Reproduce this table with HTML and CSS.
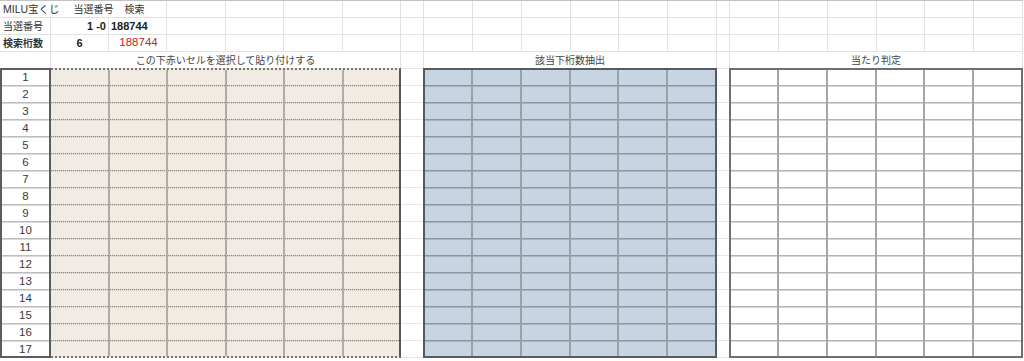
FILE: index.html
```html
<!DOCTYPE html>
<html lang="ja">
<head>
<meta charset="utf-8">
<title>MILU宝くじ</title>
<link rel="stylesheet" href="styles.css">
</head>
<body>
<div class="sheet">
  <div class="hdr">
    <div class="c span3 lbl"><span>MILU宝くじ</span><span class="w1">当選番号</span><span class="w2">検索</span></div>
    <span></span><span></span><span></span><span></span><span></span><span></span><span></span><span></span><span></span><span></span><span></span><span></span><span></span><span></span><span></span><span></span><span></span><span></span>

    <div class="c lbl">当選番号</div>
    <div class="c num bold right">1 -0</div>
    <div class="c num bold left">188744</div>
    <span></span><span></span><span></span><span></span><span></span><span></span><span></span><span></span><span></span><span></span><span></span><span></span><span></span><span></span><span></span><span></span><span></span><span></span>

    <div class="c lbl bold">検索桁数</div>
    <div class="c num bold center">6</div>
    <div class="c num red center">188744</div>
    <span></span><span></span><span></span><span></span><span></span><span></span><span></span><span></span><span></span><span></span><span></span><span></span><span></span><span></span><span></span><span></span><span></span><span></span>

    <div class="c r4"></div>
    <div class="c r4 ttl span6">この下赤いセルを選択して貼り付けする</div>
    <div class="c r4"></div>
    <div class="c r4 ttl span6">該当下桁数抽出</div>
    <div class="c r4"></div>
    <div class="c r4 ttl span6">当たり判定</div>
  </div>

  <div class="body">
    <div class="nums">
      <div>1</div><div>2</div><div>3</div><div>4</div><div>5</div><div>6</div><div>7</div><div>8</div><div>9</div><div>10</div><div>11</div><div>12</div><div>13</div><div>14</div><div>15</div><div>16</div><div>17</div>
    </div>
    <div class="box beige">
      <div class="col"></div><div class="col"></div><div class="col"></div><div class="col"></div><div class="col"></div><div class="col"></div>
    </div>
    <div class="gap g1"></div>
    <div class="box blue">
      <div class="col"></div><div class="col"></div><div class="col"></div><div class="col"></div><div class="col"></div><div class="col"></div>
    </div>
    <div class="gap g2"></div>
    <div class="box white">
      <div class="col"></div><div class="col"></div><div class="col"></div><div class="col"></div><div class="col"></div><div class="col"></div>
    </div>
  </div>
</div>
</body>
</html>
```

FILE: styles.css
```css
* { box-sizing: border-box; }

html, body {
  margin: 0;
  padding: 0;
  background: #ffffff;
}

.sheet {
  width: 1024px;
  height: 361px;
  overflow: hidden;
  font-family: "Liberation Sans", "Noto Sans CJK JP", sans-serif;
  color: #333333;
}

/* ---------- header rows ---------- */
.hdr {
  display: grid;
  grid-template-columns:
    51px 58px 58px 59px 58px 59px 58px
    23px 49px 49px 49px 48px 49px 49px
    13px 49px 49px 49px 48px 49px 49px;
  grid-template-rows: 17px 17px 17px 16px;
  border-top: 1px solid #c2c2c2;
  width: 1023px;
}

.hdr > * {
  border-right: 1px solid #e1e1e1;
  border-bottom: 1px solid #e1e1e1;
}

.hdr > .r4 { border-bottom: 0; }

.c {
  display: flex;
  align-items: center;
  white-space: nowrap;
  overflow: visible;
  line-height: 1;
  min-width: 0;
}

.span3 { grid-column: span 3; }
.span6 { grid-column: span 6; }

.lbl {
  font-family: "Noto Sans CJK JP", sans-serif;
  font-size: 10px;
  padding-left: 3px;
  color: #333333;
}

.lbl span:first-child { font-family: "Liberation Sans", "Noto Sans CJK JP", sans-serif; font-size: 10.5px; }
.w1 { margin-left: 14px; }
.w2 { margin-left: 11px; }

.num {
  font-size: 11px;
  color: #222222;
}

.bold { font-weight: bold; }
.right { justify-content: flex-end; padding-right: 2px; }
.left { justify-content: flex-start; padding-left: 2px; }
.center { justify-content: center; }
.red { color: #c0262c; padding-left: 2px; font-size: 11.5px; }

.ttl {
  justify-content: center;
  font-family: "Noto Sans CJK JP", sans-serif;
  font-size: 10px;
  color: #444444;
}

/* ---------- body ---------- */
.body {
  display: flex;
  height: 290px;
}

.nums {
  flex: none;
  width: 51px;
  border: 2px solid #5c5c5c;
  background: repeating-linear-gradient(to bottom,
    transparent 0 15px, #bdbdbd 15px 16px, #d9d9d9 16px 17px);
}

.nums div {
  height: 17px;
  line-height: 15px;
  text-align: center;
  font-size: 11.5px;
  color: #3a3a3a;
}

.box {
  flex: none;
  display: flex;
  width: 294px;
}

.col {
  flex: none;
  height: 100%;
}

/* beige paste area */
.beige {
  width: 350px;
  border-top: 2px dotted #7a736c;
  border-bottom: 2px dotted #7a736c;
  border-right: 2px solid #5e5852;
  background-color: #efe9e1;
}

.beige .col {
  border-right: 2px solid #b0aba6;
  background:
    repeating-linear-gradient(to right, transparent 0 1px, rgba(243, 238, 231, 0.7) 1px 2px),
    repeating-linear-gradient(to bottom,
      transparent 0 15px, #8f8881 15px 16px, #d8d1c9 16px 17px);
}

.beige .col:nth-child(1) { width: 59px; }
.beige .col:nth-child(2) { width: 58px; }
.beige .col:nth-child(3) { width: 59px; }
.beige .col:nth-child(4) { width: 58px; }
.beige .col:nth-child(5) { width: 59px; }
.beige .col:nth-child(6) { width: 55px; border-right: 0; }

/* blue extract area */
.blue {
  border: 2px solid #565b61;
  background-color: #c7d4e1;
}

.blue .col {
  border-right: 2px solid #98a0a9;
  background: repeating-linear-gradient(to bottom,
    transparent 0 15px, #8e959d 15px 16px, #aab3bd 16px 17px);
}

/* white judgement area */
.white {
  border: 2px solid #6f6f6f;
  background-color: #ffffff;
}

.white .col {
  border-right: 2px solid #a5a5a5;
  background: repeating-linear-gradient(to bottom,
    transparent 0 15px, #b3b3b3 15px 16px, #d6d6d6 16px 17px);
}

.blue .col:nth-child(1), .white .col:nth-child(1) { width: 48px; }
.blue .col:nth-child(2), .white .col:nth-child(2) { width: 49px; }
.blue .col:nth-child(3), .white .col:nth-child(3) { width: 49px; }
.blue .col:nth-child(4), .white .col:nth-child(4) { width: 48px; }
.blue .col:nth-child(5), .white .col:nth-child(5) { width: 49px; }
.blue .col:nth-child(6), .white .col:nth-child(6) { width: 47px; border-right: 0; }

/* empty gap columns */
.gap {
  flex: none;
  background: repeating-linear-gradient(to bottom,
    #e6e6e6 0 1px, transparent 1px 17px);
}

.g1 { width: 22px; }
.g2 { width: 12px; }
```
